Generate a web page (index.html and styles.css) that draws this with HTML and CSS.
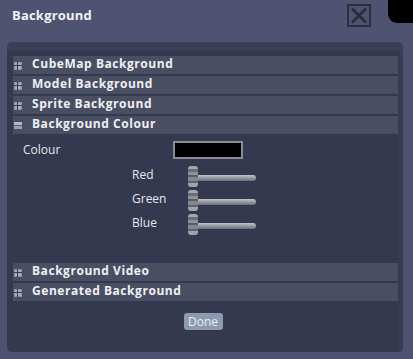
FILE: index.html
```html
<!DOCTYPE html>
<html>
<head>
<meta charset="utf-8">
<link rel="stylesheet" href="styles.css">
</head>
<body>
<div class="window">
  <div class="corner"></div>
  <div class="titlebar">
    <span class="title">Background</span>
    <span class="close">
      <svg width="20" height="19" viewBox="0 0 20 19"><path d="M3 2.5 L17 16.5 M17 2.5 L3 16.5" stroke="#2c2e3e" stroke-width="3" fill="none"/></svg>
    </span>
  </div>
  <div class="panel">
    <div class="list">
      <div class="row"><span class="ico plus"></span><span class="label">CubeMap Background</span></div>
      <div class="row"><span class="ico plus"></span><span class="label">Model Background</span></div>
      <div class="row"><span class="ico plus"></span><span class="label">Sprite Background</span></div>
      <div class="row"><span class="ico minus"></span><span class="label">Background Colour</span></div>
      <div class="content">
        <div class="colour-line"><span class="ctext">Colour</span><span class="swatch"></span></div>
        <div class="slider-line"><span class="stext">Red</span><span class="slider"><span class="thumb"></span><span class="track"></span></span></div>
        <div class="slider-line"><span class="stext">Green</span><span class="slider"><span class="thumb"></span><span class="track"></span></span></div>
        <div class="slider-line"><span class="stext">Blue</span><span class="slider"><span class="thumb"></span><span class="track"></span></span></div>
      </div>
      <div class="row"><span class="ico plus"></span><span class="label">Background Video</span></div>
      <div class="row"><span class="ico plus"></span><span class="label">Generated Background</span></div>
    </div>
    <div class="footer"><span class="done">Done</span></div>
  </div>
</div>
</body>
</html>
```
FILE: styles.css
```css
html, body {
  margin: 0;
  padding: 0;
  background: #000;
}
.window {
  position: relative;
  width: 413px;
  height: 359px;
  background: #505272;
  overflow: hidden;
  font-family: "Open Sans", "Noto Sans", sans-serif;
}
.corner {
  position: absolute;
  right: 0;
  top: 0;
  width: 25px;
  height: 23px;
  background: #000;
  border-bottom-left-radius: 9px;
}
.titlebar {
  height: 42px;
  display: flex;
  align-items: flex-start;
  justify-content: space-between;
  box-sizing: border-box;
  padding: 4px 42px 0 12px;
}
.title {
  color: #f2f2f6;
  font-weight: 700;
  font-size: 13px;
  line-height: 16px;
  margin-top: 3px;
  letter-spacing: 0.2px;
}
.close {
  width: 20px;
  height: 19px;
  border: 2px solid #2c2e3e;
  display: flex;
}
.panel {
  margin-left: 7px;
  width: 396px;
  height: 310px;
  background: #353950;
  border-radius: 5px;
  box-sizing: border-box;
  border-top: 9px solid #3b3e56;
  box-shadow: inset -4px 0 0 #393c53;
  padding: 5px 5px 0 6px;
  display: flex;
  flex-direction: column;
}
.list {
  display: flex;
  flex-direction: column;
  gap: 2px;
}
.row {
  height: 18px;
  background: #4a4e63;
  display: flex;
  align-items: center;
}
.ico {
  width: 8px;
  height: 8px;
  margin-left: 1px;
  margin-top: 1px;
  background: #a9adb8;
  position: relative;
  box-sizing: border-box;
  border: 1px solid #8d91a0;
}
.plus::before {
  content: "";
  position: absolute;
  left: 2px;
  top: -1px;
  width: 1px;
  height: 8px;
  background: #3a3e50;
}
.plus::after {
  content: "";
  position: absolute;
  left: -1px;
  top: 2px;
  width: 8px;
  height: 1px;
  background: #3a3e50;
}
.minus {
  border: none;
  height: 7px;
  background: linear-gradient(#b4b8c2 0 3px, #555a6c 3px 4px, #9ea2ae 4px);
}
.label {
  margin-left: 10px;
  color: #f0f0f4;
  font-weight: 700;
  font-size: 12px;
  letter-spacing: 0.55px;
  line-height: 16px;
  margin-top: -3px;
}
.content {
  height: 125px;
  padding-left: 10px;
  color: #e6e7ee;
  font-size: 12px;
}
.colour-line {
  display: flex;
  align-items: center;
  margin-top: 5px;
  height: 17px;
}
.ctext {
  width: 150px;
}
.swatch {
  width: 66px;
  height: 14px;
  background: #000;
  border: 2px solid #8a8c98;
}
.slider-line {
  display: flex;
  align-items: center;
  height: 21px;
  margin-top: 3px;
  margin-left: 109px;
}
.colour-line + .slider-line {
  margin-top: 8px;
}
.stext {
  width: 56px;
  margin-top: -5px;
}
.slider {
  display: flex;
  align-items: center;
}
.thumb {
  width: 10px;
  height: 21px;
  border-radius: 3px;
  background: linear-gradient(#a4a6b0 0 3px, #6a6c78 3px 6px, #8e909a 6px 9px, #5a5c66 9px 11px, #84868f 11px 15px, #5e606a 15px 17px, #a0a2ac 17px);
}
.track {
  width: 58px;
  height: 6px;
  margin-top: 3px;
  border-radius: 0 3px 3px 0;
  background: linear-gradient(#c4c6cc, #8e9098 60%, #6c6e78);
}
.footer {
  display: flex;
  justify-content: center;
  margin-top: 12px;
  padding-right: 5px;
}
.done {
  width: 39px;
  height: 17px;
  background: #8d9bb0;
  border-radius: 3px;
  color: #e8ecf2;
  font-size: 12px;
  line-height: 17px;
  text-align: center;
}
```
